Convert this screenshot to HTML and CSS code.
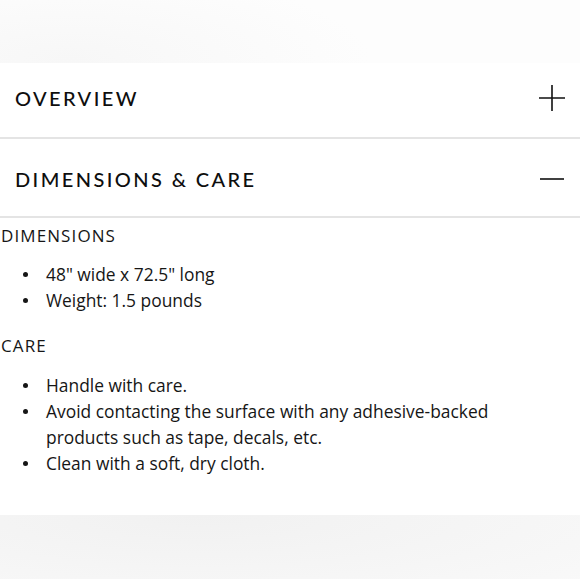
FILE: index.html
```html
<!DOCTYPE html>
<html lang="en">
<head>
<meta charset="utf-8">
<title>Dimensions &amp; Care</title>
<link rel="stylesheet" href="styles.css">
</head>
<body>
<div class="top-band"></div>
<section class="accordion">
  <div class="acc-header acc-first">
    <span class="acc-title">OVERVIEW</span>
    <svg class="acc-icon" width="26" height="26" viewBox="0 0 26 26"><path d="M13 0V26M0 13H26" stroke="#111" stroke-width="1.6" fill="none"/></svg>
  </div>
  <div class="acc-header acc-second">
    <span class="acc-title">DIMENSIONS &amp; CARE</span>
    <svg class="acc-icon" width="26" height="26" viewBox="0 0 26 26"><path d="M1 13H25" stroke="#111" stroke-width="1.6" fill="none"/></svg>
  </div>
  <div class="acc-body">
    <h3 class="sub-title">DIMENSIONS</h3>
    <ul class="list">
      <li>48" wide x 72.5" long</li>
      <li>Weight: 1.5 pounds</li>
    </ul>
    <h3 class="sub-title">CARE</h3>
    <ul class="list">
      <li>Handle with care.</li>
      <li>Avoid contacting the surface with any adhesive-backed products such as tape, decals, etc.</li>
      <li>Clean with a soft, dry cloth.</li>
    </ul>
  </div>
</section>
<div class="bottom-band"></div>
</body>
</html>
```
FILE: styles.css
```css
html, body {
  margin: 0;
  padding: 0;
  background: #ffffff;
  color: #161616;
  font-family: "Open Sans", "Liberation Sans", sans-serif;
}
.top-band {
  height: 63px;
  background: radial-gradient(ellipse 300px 90px at 70px 60px, #f7f7f7, #fdfdfd);
}
.accordion {
  background: #fff;
}
.acc-header {
  padding: 0 15px 0 15px;
  display: flex;
  align-items: center;
  justify-content: space-between;
  border-bottom: 2px solid #e4e4e4;
  box-sizing: border-box;
}
.acc-first {
  height: 76px;
  padding-bottom: 5px;
}
.acc-second {
  height: 79px;
  padding-top: 3px;
}
.acc-title {
  font-family: "Lato", "Liberation Sans", sans-serif;
  font-size: 20px;
  font-weight: 500;
  letter-spacing: 2.4px;
  color: #0e0e0e;
}
.acc-icon {
  display: block;
}
.acc-body {
  padding: 8px 0 0 1px;
  height: 297px;
  box-sizing: border-box;
}
.sub-title {
  margin: 0 0 15px 0;
  font-size: 17px;
  font-weight: 400;
  letter-spacing: 1.1px;
  line-height: 20px;
}
.list {
  margin: 0 0 23px 0;
  padding: 0 0 0 21px;
  list-style: none;
  max-width: 480px;
  font-size: 17.4px;
  line-height: 26px;
}
.list + .sub-title + .list {
  padding-top: 1px;
}
.list li {
  display: flex;
  align-items: flex-start;
}
.list li::before {
  content: "";
  flex: none;
  width: 5px;
  height: 5px;
  margin: 11px 18px 0 1px;
  border-radius: 50%;
  background: #161616;
}
.bottom-band {
  height: 64px;
  background: radial-gradient(ellipse 600px 120px at 200px 0px, #f1f1f1, #fafafa);
}
```
